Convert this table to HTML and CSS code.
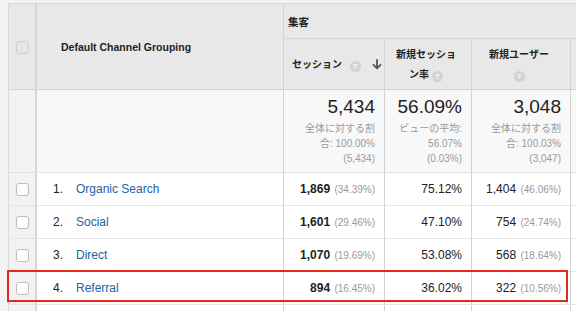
FILE: index.html
```html
<!DOCTYPE html>
<html lang="ja">
    <head>
        <meta charset="UTF-8" />
        <meta name="viewport" content="width=device-width, initial-scale=1" />
        <link rel="stylesheet" href="styles.css">
        <title>Default Channel Grouping</title>
    </head>

    <body>
        <section class="report">
            <table class="grid">
                <colgroup>
                    <col class="c-check" />
                    <col class="c-dim" />
                    <col class="c-sessions" />
                    <col class="c-rate" />
                    <col class="c-users" />
                    <col class="c-more" />
                </colgroup>
                <thead>
                    <tr class="group-row">
                        <th rowspan="2" class="check-cell">
                            <span class="box disabled"></span>
                        </th>
                        <th rowspan="2" class="dim-head">Default Channel Grouping</th>
                        <th colspan="4" class="group">集客</th>
                    </tr>
                    <tr class="metric-row">
                        <th class="metric sorted">
                            <span>セッション</span>
                            <span class="help">?</span>
                            <svg class="arrow" width="10" height="11" viewBox="0 0 10 11">
                                <path d="M5 1 V9 M1.5 5.8 L5 9.3 L8.5 5.8" fill="none" stroke="#555" stroke-width="1.8" stroke-linecap="round" stroke-linejoin="round" />
                            </svg>
                        </th>
                        <th class="metric">新規セッショ<br />ン率 <span class="help">?</span></th>
                        <th class="metric">新規ユーザー<br /><span class="help">?</span></th>
                        <th class="metric"></th>
                    </tr>
                </thead>
                <tbody>
                    <tr class="totals">
                        <td class="check-cell"></td>
                        <td></td>
                        <td class="total">
                            <div class="big">5,434</div>
                            <div class="note">全体に対する割<br />合: 100.00%<br />(5,434)</div>
                        </td>
                        <td class="total">
                            <div class="big">56.09%</div>
                            <div class="note">ビューの平均:<br />56.07%<br />(0.03%)</div>
                        </td>
                        <td class="total">
                            <div class="big">3,048</div>
                            <div class="note">全体に対する割<br />合: 100.03%<br />(3,047)</div>
                        </td>
                        <td></td>
                    </tr>
                    <tr class="row">
                        <td class="check-cell"><span class="box"></span></td>
                        <td class="dim"><span class="idx">1.</span><a href="#">Organic Search</a></td>
                        <td class="num"><b>1,869</b> <span class="pct">(34.39%)</span></td>
                        <td class="num">75.12%</td>
                        <td class="num">1,404 <span class="pct">(46.06%)</span></td>
                        <td></td>
                    </tr>
                    <tr class="row">
                        <td class="check-cell"><span class="box"></span></td>
                        <td class="dim"><span class="idx">2.</span><a href="#">Social</a></td>
                        <td class="num"><b>1,601</b> <span class="pct">(29.46%)</span></td>
                        <td class="num">47.10%</td>
                        <td class="num">754 <span class="pct">(24.74%)</span></td>
                        <td></td>
                    </tr>
                    <tr class="row">
                        <td class="check-cell"><span class="box"></span></td>
                        <td class="dim"><span class="idx">3.</span><a href="#">Direct</a></td>
                        <td class="num"><b>1,070</b> <span class="pct">(19.69%)</span></td>
                        <td class="num">53.08%</td>
                        <td class="num">568 <span class="pct">(18.64%)</span></td>
                        <td></td>
                    </tr>
                    <tr class="row">
                        <td class="check-cell"><span class="box"></span></td>
                        <td class="dim"><span class="idx">4.</span><a href="#">Referral</a></td>
                        <td class="num"><b>894</b> <span class="pct">(16.45%)</span></td>
                        <td class="num">36.02%</td>
                        <td class="num">322 <span class="pct">(10.56%)</span></td>
                        <td></td>
                    </tr>
                    <tr class="row">
                        <td class="check-cell"></td>
                        <td></td>
                        <td></td>
                        <td></td>
                        <td></td>
                        <td></td>
                    </tr>
                </tbody>
            </table>

            <div class="highlight"></div>
        </section>
    </body>
</html>
```

FILE: styles.css
```css
* {
    box-sizing: border-box;
}

body {
    margin: 0;
    font-family: "Liberation Sans", "Noto Sans CJK JP", Arial, sans-serif;
    color: #222;
}

.report {
    position: relative;
    width: 576px;
    height: 311px;
    overflow: hidden;
    background-color: #f3f3f3;
    padding: 3px 0 0 8px;
}

.grid {
    border-collapse: separate;
    border-spacing: 0;
    table-layout: fixed;
    width: 623px;
    border-top: 1px solid #d6d6d6;
    border-left: 1px solid #d9d9d9;
}

.c-check {
    width: 28px;
}
.c-dim {
    width: 247px;
}
.c-sessions {
    width: 101px;
}
.c-rate {
    width: 87px;
}
.c-users {
    width: 99px;
}
.c-more {
    width: 61px;
}

th,
td {
    padding: 0;
    border-right: 1px solid #d2d2d2;
    border-bottom: 1px solid #dedede;
}

thead th {
    background-color: #e8e8e8;
    font-weight: bold;
    border-bottom-color: #d4d4d4;
}

.group-row {
    height: 35px;
}
.metric-row {
    height: 51px;
}

.check-cell {
    text-align: center;
    background-color: #f2f2f2;
    border-right: 2px solid #d6d6d6;
}

thead .check-cell {
    background-color: #e8e8e8;
}

.box {
    display: inline-block;
    width: 13px;
    height: 13px;
    vertical-align: middle;
    border: 1px solid #bdbdbd;
    border-radius: 3px;
    background-color: #fff;
}

.box.disabled {
    border-color: #cfcfcf;
    background-color: #e6e6e6;
}

.dim-head {
    text-align: left;
    padding-left: 24px;
    font-size: 10.5px;
}

.group {
    text-align: left;
    padding-left: 4px;
    font-size: 10.5px;
}

.metric {
    font-size: 10px;
    line-height: 20px;
    text-align: center;
    padding: 1px 10px 0 6px;
}

.metric.sorted {
    text-align: left;
    padding-left: 8px;
    padding-right: 0;
    white-space: nowrap;
}

.help {
    display: inline-block;
    width: 11px;
    height: 11px;
    line-height: 11px;
    border-radius: 50%;
    background-color: #d2d2d2;
    color: #fff;
    font-family: "Liberation Sans", Arial, sans-serif;
    font-size: 8px;
    font-weight: bold;
    text-align: center;
    vertical-align: -1px;
}

.sorted .help {
    margin-left: 5px;
}

.arrow {
    vertical-align: -2px;
    margin-left: 8px;
}

.totals {
    height: 83px;
}

.totals td {
    background-color: #f8f8f8;
    border-bottom-color: #e3e3e3;
}

.totals .check-cell {
    background-color: #f2f2f2;
}

.total {
    vertical-align: top;
    text-align: right;
    padding: 6px 9px 0 0;
}

.big {
    font-size: 19px;
    line-height: 22px;
}

.note {
    margin-top: 3px;
    font-size: 10px;
    line-height: 15px;
    color: #9a9a9a;
}

.row {
    height: 33px;
}

.row td {
    background-color: #fff;
    border-bottom-color: #e6e6e6;
    font-size: 12px;
}

.row .check-cell {
    background-color: #f2f2f2;
}

.dim {
    padding-left: 16px;
}

.idx {
    display: inline-block;
    width: 23px;
}

.dim a {
    color: #2163a6;
    text-decoration: none;
}

.num {
    text-align: right;
    padding-right: 9px;
    white-space: nowrap;
}

.pct {
    margin-left: 1px;
    font-size: 10px;
    color: #9a9a9a;
}

.highlight {
    position: absolute;
    left: 7px;
    top: 270px;
    width: 561px;
    height: 32px;
    border: 2px solid #e6281c;
}
```
